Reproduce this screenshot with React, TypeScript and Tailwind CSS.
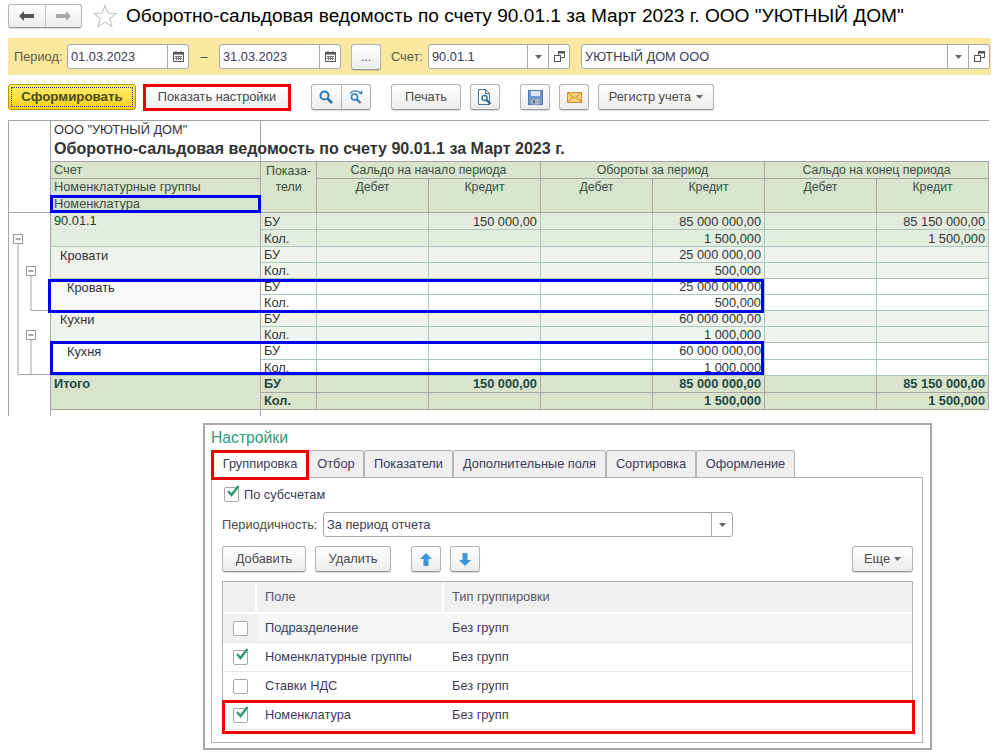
import type { ReactNode } from "react";

const rowGroups = [
  { name: "90.01.1", indent: "pl-[3px]", nameBg: "bg-[#e3eddd]", bg: "bg-[#e3eddd]", h: "h-[17px]", pad: "", bu: ["", "150 000,00", "", "85 000 000,00", "", "85 150 000,00"], kol: ["", "", "", "1 500,000", "", "1 500,000"] },
  { name: "Кровати", indent: "pl-[9px]", nameBg: "bg-[#eef3ec]", bg: "bg-[#eff4ee]", h: "h-[16px]", pad: "pt-[1px]", bu: ["", "", "", "25 000 000,00", "", ""], kol: ["", "", "", "500,000", "", ""] },
  { name: "Кровать", indent: "pl-[16px]", nameBg: "bg-[#f8f8f8]", bg: "bg-white", h: "h-[16px]", pad: "pt-[1px]", bu: ["", "", "", "25 000 000,00", "", ""], kol: ["", "", "", "500,000", "", ""] },
  { name: "Кухни", indent: "pl-[9px]", nameBg: "bg-[#eff4ee]", bg: "bg-[#eff4ee]", h: "h-[16px]", pad: "pt-[1px]", bu: ["", "", "", "60 000 000,00", "", ""], kol: ["", "", "", "1 000,000", "", ""] },
  { name: "Кухня", indent: "pl-[16px]", nameBg: "bg-white", bg: "bg-white", h: "h-[16px]", pad: "pt-[1px]", bu: ["", "", "", "60 000 000,00", "", ""], kol: ["", "", "", "1 000,000", "", ""] },
];

const totals = {
  bu: ["", "150 000,00", "", "85 000 000,00", "", "85 150 000,00"],
  kol: ["", "", "", "1 500,000", "", "1 500,000"],
};

const tabs = [
  { label: "Отбор", w: "w-[56px]" },
  { label: "Показатели", w: "w-[89px]" },
  { label: "Дополнительные поля", w: "w-[153px]" },
  { label: "Сортировка", w: "w-[90px]" },
  { label: "Оформление", w: "w-[99px]" },
];

const fields = [
  { name: "Подразделение", checked: false, bg: "bg-[#f7f7f7]" },
  { name: "Номенклатурные группы", checked: true, bg: "bg-white" },
  { name: "Ставки НДС", checked: false, bg: "bg-white" },
  { name: "Номенклатура", checked: true, bg: "bg-white" },
];

const btn =
  "flex items-center justify-center rounded-[3px] border border-[#b4b4b4] border-b-[#999] bg-gradient-to-b from-white to-[#ececec] text-[#4a4a4a] shadow-[0_1px_1px_rgba(0,0,0,0.15)]";

function CalendarIcon() {
  return (
    <svg width="13" height="13" viewBox="0 0 13 13">
      <rect x="1.5" y="2.5" width="10" height="9" fill="#fff" stroke="#555" />
      <rect x="1.5" y="2.5" width="10" height="2" fill="#555" />
      <path d="M4 1v2M9 1v2" stroke="#555" />
      <path d="M3 6.5h7M3 8.5h7M4.5 6v4M6.5 6v4M8.5 6v4" stroke="#777" />
    </svg>
  );
}

function CopyIcon() {
  return (
    <svg width="13" height="13" viewBox="0 0 13 13" fill="none" stroke="#555">
      <rect x="5.5" y="1.5" width="6" height="6" fill="#fff" />
      <rect x="1.5" y="5.5" width="6" height="6" fill="#fff" />
      <path d="M5.5 1.5h6v1.5h-6z" fill="#555" />
    </svg>
  );
}

function Caret() {
  return (
    <svg width="7" height="4" viewBox="0 0 7 4">
      <path d="M0 0h7L3.500 4z" fill="#666" />
    </svg>
  );
}

function SearchIcon() {
  return (
    <svg width="16" height="16" viewBox="0 0 16 16" fill="none">
      <circle cx="6.500" cy="6.500" r="4" stroke="#2e7cb8" strokeWidth="2" />
      <path d="M9.500 9.500l4.500 4.500" stroke="#2e6ea0" strokeWidth="2.500" />
    </svg>
  );
}

function SearchCycleIcon() {
  return (
    <svg width="16" height="16" viewBox="0 0 16 16" fill="none">
      <circle cx="6.500" cy="8" r="3" stroke="#2e7cb8" strokeWidth="1.600" />
      <path d="M9 10.500l3.500 3.500" stroke="#2e6ea0" strokeWidth="2" />
      <path d="M2 4.500C4 1.500 9 1 12 3.500" stroke="#2e7cb8" strokeWidth="1.300" />
      <path d="M14.500 1.500l-.5 4-3.500-1z" fill="#2e7cb8" />
    </svg>
  );
}

function PreviewIcon() {
  return (
    <svg width="16" height="18" viewBox="0 0 16 18" fill="none">
      <path d="M1.500 1.500h7l4 4v11h-11z" fill="#fff" stroke="#5c6f80" />
      <path d="M8.500 1.500v4h4" stroke="#5c6f80" />
      <circle cx="7.500" cy="10" r="2.500" stroke="#2e7cb8" strokeWidth="1.600" />
      <path d="M9.500 12l4 4" stroke="#1e5f90" strokeWidth="2.200" />
    </svg>
  );
}

function SaveIcon() {
  return (
    <svg width="15" height="15" viewBox="0 0 15 15">
      <rect x="0.500" y="0.500" width="14" height="14" fill="#6d9bd0" stroke="#4b79ad" />
      <rect x="3" y="1" width="9" height="5" fill="#dbe6f2" />
      <rect x="3.500" y="9" width="8" height="5.500" fill="#a9b4bf" />
      <rect x="5" y="10" width="2" height="3.500" fill="#5c7288" />
    </svg>
  );
}

function MailIcon() {
  return (
    <svg width="15" height="11" viewBox="0 0 15 11" fill="none">
      <rect x="0.500" y="0.500" width="14" height="10" fill="#f8d27a" stroke="#cf8f2e" />
      <path d="M1 1l6.500 5L14 1M1 10l4.500-5M14 10L9.500 5" stroke="#cf8f2e" />
    </svg>
  );
}

function CheckBox({ checked }: { checked: boolean }) {
  return (
    <span className="relative block size-[15px] rounded-[2px] border border-[#a8a8a8] bg-white">
      {checked && (
        <svg className="absolute -top-[4px] left-[1px]" width="14" height="14" viewBox="0 0 14 14" fill="none">
          <path d="M2 7l3.500 4L12.500 2" stroke="#2f9a6d" strokeWidth="2.400" />
        </svg>
      )}
    </span>
  );
}

function Field({ value, w, children }: { value: string; w: string; children: ReactNode }) {
  return (
    <div className={`flex h-[25px] ${w} shrink-0 rounded-[3px] border border-[#a8a8a8] bg-white`}>
      <span className="flex-1 truncate pl-[3px] text-[12.8px] leading-[23px] text-[#3b3b55]">{value}</span>
      {children}
    </div>
  );
}

function SideBtn({ children }: { children: ReactNode }) {
  return <span className="flex w-[21px] items-center justify-center border-l border-[#a8a8a8]">{children}</span>;
}

function ValueCells({ values, bold }: { values: string[]; bold?: boolean }) {
  return (
    <>
      {values.map((v, i) => (
        <td
          className={`border pr-[3px] text-right text-[12.8px] leading-[15px] ${bold ? "border-[#a8a8a8] font-bold text-[#24483f]" : "border-[#abc6ba] text-[#333]"}`}
          key={i}
        >
          {v}
        </td>
      ))}
    </>
  );
}

function ReportTable() {
  const head = "border border-[#a5a5a5] bg-[#d8e4cc] align-top leading-[16px] text-[#3d4f45]";
  return (
    <div className="relative ml-[8px] mt-[10px] h-[295px] w-[980px]">
      <table className="w-[980px] table-fixed border-collapse">
        <colgroup>
          <col className="w-[42px]" />
          <col className="w-[210px]" />
          <col className="w-[56px]" />
          <col className="w-[112px]" />
          <col className="w-[112px]" />
          <col className="w-[112px]" />
          <col className="w-[112px]" />
          <col className="w-[112px]" />
          <col className="w-[112px]" />
        </colgroup>
        <tbody>
          <tr className="h-[41px]">
            <td className="border border-[#a5a5a5]" rowSpan={4} />
            <td className="whitespace-nowrap border border-[#a5a5a5] pl-[3px] align-top">
              <div className="text-[12.8px] leading-[17px] text-[#333]">ООО "УЮТНЫЙ ДОМ"</div>
              <div className="text-[16.06px] font-bold leading-[20px] text-[#333]">Оборотно-сальдовая ведомость по счету 90.01.1 за Март 2023 г.</div>
            </td>
            <td className="border-t border-[#a5a5a5]" colSpan={7} />
          </tr>
          <tr className="h-[17px]">
            <td className={`${head} pl-[3px] text-[12.8px]`}>Счет</td>
            <td className={`${head} px-[2px] pt-[1px] text-center text-[12.4px] leading-[15px]`} rowSpan={3}>
              Показа-
              <br />
              тели
            </td>
            <td className={`${head} text-center text-[12.3px]`} colSpan={2}>Сальдо на начало периода</td>
            <td className={`${head} text-center text-[12.3px]`} colSpan={2}>Обороты за период</td>
            <td className={`${head} text-center text-[12.3px]`} colSpan={2}>Сальдо на конец периода</td>
          </tr>
          <tr className="h-[17px]">
            <td className={`${head} pl-[3px] text-[12.8px]`}>Номенклатурные группы</td>
            <td className={`${head} text-center text-[12.3px]`} rowSpan={2}>Дебет</td>
            <td className={`${head} text-center text-[12.3px]`} rowSpan={2}>Кредит</td>
            <td className={`${head} text-center text-[12.3px]`} rowSpan={2}>Дебет</td>
            <td className={`${head} text-center text-[12.3px]`} rowSpan={2}>Кредит</td>
            <td className={`${head} text-center text-[12.3px]`} rowSpan={2}>Дебет</td>
            <td className={`${head} text-center text-[12.3px]`} rowSpan={2}>Кредит</td>
          </tr>
          <tr className="h-[17px]">
            <td className={`${head} pl-[3px] text-[12.8px]`}>Номенклатура</td>
          </tr>
          {rowGroups.map((g, gi) => (
            <>
              <tr className={`${g.h} ${g.bg}`} key={g.name}>
                {gi === 0 && (
                  <td className="relative border-l border-[#a5a5a5] bg-white p-0 align-top" rowSpan={10}>
                    <svg className="block" width="42" height="162" viewBox="0 0 42 162" fill="none">
                      <path d="M9 30.500V161.500H42M22 62.500V97.500H42M22 126.500V161.500" stroke="#a5a5a5" />
                      <rect x="4.500" y="21.500" width="9" height="9" fill="#fff" stroke="#999" />
                      <path d="M6.500 26h5" stroke="#555" />
                      <rect x="17.500" y="53.500" width="9" height="9" fill="#fff" stroke="#999" />
                      <path d="M19.500 58h5" stroke="#555" />
                      <rect x="17.500" y="117.500" width="9" height="9" fill="#fff" stroke="#999" />
                      <path d="M19.500 122h5" stroke="#555" />
                    </svg>
                  </td>
                )}
                <td className={`border border-[#a5a5a5] border-b-[#abc6ba] border-t-[#abc6ba] ${g.nameBg} ${g.indent} ${g.pad} align-top text-[12.8px] leading-[15px] text-[#333]`} rowSpan={2}>
                  {g.name}
                </td>
                <td className="border border-[#abc6ba] border-l-[#a5a5a5] pl-[3px] text-[12.8px] leading-[15px] text-[#333]">БУ</td>
                <ValueCells values={g.bu} />
              </tr>
              <tr className={`${g.h} ${g.bg}`} key={`${g.name}-kol`}>
                <td className="border border-[#abc6ba] border-l-[#a5a5a5] pl-[3px] text-[12.8px] leading-[15px] text-[#333]">Кол.</td>
                <ValueCells values={g.kol} />
              </tr>
            </>
          ))}
          <tr className="h-[17px] bg-[#d8e4cc]">
            <td className="border-l border-[#a5a5a5] bg-white" rowSpan={3} />
            <td className="border border-[#a5a5a5] pl-[3px] align-top text-[12.8px] font-bold leading-[15px] text-[#24483f]" rowSpan={2}>Итого</td>
            <td className="border border-[#a5a5a5] pl-[3px] text-[12.8px] font-bold leading-[15px] text-[#24483f]">БУ</td>
            <ValueCells values={totals.bu} bold />
          </tr>
          <tr className="h-[17px] bg-[#d8e4cc]">
            <td className="border border-[#a5a5a5] pl-[3px] text-[12.8px] font-bold leading-[15px] text-[#24483f]">Кол.</td>
            <ValueCells values={totals.kol} bold />
          </tr>
          <tr className="h-[7px]">
            <td className="border-x border-[#a5a5a5]" />
            <td colSpan={7} />
          </tr>
        </tbody>
      </table>
      {/* рамки-выделения поверх таблицы */}
      <div className="absolute left-[42px] top-[75px] h-[18px] w-[211px] border-[3px] border-[#0000f0]" />
      <div className="absolute left-[40px] top-[159px] h-[34px] w-[716px] border-[3px] border-[#0000f0]" />
      <div className="absolute left-[42px] top-[221px] h-[34px] w-[714px] border-[3px] border-[#0000f0]" />
    </div>
  );
}

function SettingsPanel() {
  return (
    <div className="ml-[203px] mt-[8px] h-[327px] w-[729px] border-2 border-[#a8a8a8] bg-white pl-[6px] pt-[3px]">
      <div className="text-[15.7px] leading-[20px] text-[#2f9a7a]">Настройки</div>
      <div className="relative mt-[2px] flex h-[27px] pl-[1px]">
        <div className="z-10 flex h-[28px] w-[96px] items-center justify-center rounded-t-[3px] bg-white text-[12.8px] text-[#3b3b55]">Группировка</div>
        {tabs.map((t) => (
          <div
            className={`flex ${t.w} items-center justify-center rounded-t-[3px] border border-b-0 border-[#b4b4b4] bg-[#efefef] text-[12.8px] text-[#3b3b55]`}
            key={t.label}
          >
            {t.label}
          </div>
        ))}
        <div className="absolute left-0 top-0 z-20 h-[30px] w-[98px] border-[3px] border-[#f00000]" />
      </div>
      <div className="h-[266px] w-[712px] border border-[#b4b4b4] px-[10px] pt-[9px]">
        <div className="ml-[2px] flex h-[15px] items-center gap-[5px] text-[12.8px] text-[#3b3b55]">
          <CheckBox checked />
          По субсчетам
        </div>
        <div className="mt-[10px] flex items-center gap-[3px]">
          <span className="w-[98px] whitespace-nowrap text-[12.8px] text-[#4d4d3f]">Периодичность:</span>
          <Field value="За период отчета" w="w-[410px]">
            <SideBtn><Caret /></SideBtn>
          </Field>
        </div>
        <div className="mt-[9px] flex h-[26px] text-[12.8px]">
          <button className={`${btn} w-[84px]`}>Добавить</button>
          <button className={`${btn} ml-[9px] w-[76px]`}>Удалить</button>
          <button className={`${btn} ml-[20px] w-[30px]`}>
            <svg width="12" height="13" viewBox="0 0 12 13"><path d="M6 0l6 6H8.500v7h-5V6H0z" fill="#3c97d8" /></svg>
          </button>
          <button className={`${btn} ml-[9px] w-[30px]`}>
            <svg width="12" height="13" viewBox="0 0 12 13"><path d="M6 13L0 7h3.500V0h5v7H12z" fill="#3c97d8" /></svg>
          </button>
          <button className={`${btn} -mr-[1px] ml-auto w-[61px] gap-[4px]`}>
            Еще <Caret />
          </button>
        </div>
        <div className="relative mt-[9px] w-[691px] border-x border-t border-[#b4b4b4]">
          <div className="flex h-[32px] border-b-2 border-white bg-[#f0f0f0] text-[12.8px] text-[#55556b]">
            <div className="w-[34px] border-r-2 border-white" />
            <div className="flex w-[187px] items-center border-r-2 border-white pl-[8px]">Поле</div>
            <div className="flex items-center pl-[8px]">Тип группировки</div>
          </div>
          {fields.map((f, i) => (
            <div className={`flex h-[29px] items-center border-b border-[#e6e6e6] ${f.bg} text-[12.8px] text-[#3b3b55] last:border-b-0`} key={f.name}>
              <div className={`flex h-full w-[34px] items-center justify-center ${i === 0 ? "bg-[#f0f0f0]" : ""}`}>
                <CheckBox checked={f.checked} />
              </div>
              <div className="w-[187px] pl-[8px]">{f.name}</div>
              <div className="pl-[8px]">Без групп</div>
            </div>
          ))}
          <div className="absolute -left-[1px] -right-[3px] -bottom-[4px] h-[34px] border-[3px] border-[#f00000]" />
        </div>
      </div>
    </div>
  );
}

export default function App() {
  return (
    <div className="relative h-[754px] w-[1008px] overflow-hidden bg-white font-['Liberation_Sans',Arial,sans-serif]">
      {/* заголовок */}
      <div className="flex h-[38px] items-start pl-[8px] pt-[4px]">
        <div className={`${btn} h-[24px] w-[74px]`}>
          <span className="flex h-full flex-1 items-center justify-center border-r border-[#c4c4c4]">
            <svg width="15" height="10" viewBox="0 0 15 10"><path d="M0 5l5-5v3h10v4H5v3z" fill="#555" /></svg>
          </span>
          <span className="flex h-full flex-1 items-center justify-center">
            <svg width="15" height="10" viewBox="0 0 15 10"><path d="M15 5l-5-5v3H0v4h10v3z" fill="#aaa" /></svg>
          </span>
        </div>
        <svg className="ml-[11px]" width="24" height="24" viewBox="0 0 24 24" fill="none">
          <path d="M12 1.500l3 7.500 8 .6-6.200 5.100 2 7.800L12 18.200l-6.800 4.300 2-7.800L1 9.600l8-.6z" stroke="#c9c9c9" strokeWidth="1.200" />
        </svg>
        <h1 className="ml-[9px] whitespace-nowrap text-[19.1px] leading-[24px] text-black">Оборотно-сальдовая ведомость по счету 90.01.1 за Март 2023 г. ООО "УЮТНЫЙ ДОМ"</h1>
      </div>

      {/* отбор */}
      <div className="ml-[8px] flex h-[37px] w-[983px] items-center bg-[#fbe8a0] pl-[6px]">
        <span className="w-[53px] text-[12.8px] text-[#5a5a40]">Период:</span>
        <Field value="01.03.2023" w="w-[122px]">
          <SideBtn><CalendarIcon /></SideBtn>
        </Field>
        <span className="w-[30px] text-center text-[12.8px] text-[#444]">–</span>
        <Field value="31.03.2023" w="w-[122px]">
          <SideBtn><CalendarIcon /></SideBtn>
        </Field>
        <button className={`${btn} ml-[10px] h-[26px] w-[30px] text-[12px]`}>...</button>
        <span className="ml-[10px] w-[37px] text-[12.8px] text-[#5a5a40]">Счет:</span>
        <Field value="90.01.1" w="w-[142px]">
          <SideBtn><Caret /></SideBtn>
          <SideBtn><CopyIcon /></SideBtn>
        </Field>
        <div className="w-[11px]" />
        <Field value="УЮТНЫЙ ДОМ ООО" w="w-[409px]">
          <SideBtn><Caret /></SideBtn>
          <SideBtn><CopyIcon /></SideBtn>
        </Field>
      </div>

      {/* панель команд */}
      <div className="ml-[8px] mt-[9px] flex h-[26px] items-center text-[12.8px]">
        <button className="flex h-[26px] w-[128px] items-center justify-center rounded-[3px] border border-[#b09a00] bg-gradient-to-b from-[#fff06a] to-[#f5cf00] p-[2px]">
          <span className="flex h-full w-full items-center justify-center border border-dotted border-[#3a3a80] text-[13.3px] font-bold text-[#4d4d1a]">Сформировать</span>
        </button>
        <div className="ml-[7px] flex h-[27px] w-[148px] items-center justify-center border-[3px] border-[#f00000] bg-gradient-to-b from-white to-[#efefef] text-[#4a4a4a]">
          Показать настройки
        </div>
        <div className={`${btn} ml-[20px] h-[26px] w-[60px]`}>
          <span className="flex h-full flex-1 items-center justify-center border-r border-[#b4b4b4]"><SearchIcon /></span>
          <span className="flex h-full flex-1 items-center justify-center"><SearchCycleIcon /></span>
        </div>
        <button className={`${btn} ml-[20px] h-[26px] w-[70px]`}>Печать</button>
        <button className={`${btn} ml-[9px] h-[26px] w-[30px]`}><PreviewIcon /></button>
        <button className={`${btn} ml-[20px] h-[26px] w-[30px]`}><SaveIcon /></button>
        <button className={`${btn} ml-[9px] h-[26px] w-[30px]`}><MailIcon /></button>
        <button className={`${btn} ml-[9px] h-[26px] w-[116px] gap-[5px]`}>
          Регистр учета <Caret />
        </button>
      </div>

      <ReportTable />
      <SettingsPanel />
    </div>
  );
}
